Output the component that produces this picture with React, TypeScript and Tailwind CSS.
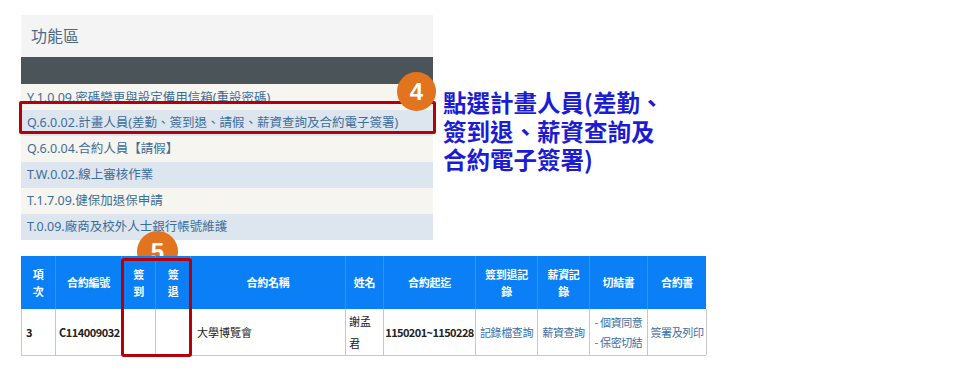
import React from "react";

const rows = [
  { t: "Y.1.0.09.密碼變更與設定備用信箱(重設密碼)", bg: "bg-[#f7f5ef]" },
  { t: "Q.6.0.02.計畫人員(差勤、簽到退、請假、薪資查詢及合約電子簽署)", bg: "bg-[#dde6ee]" },
  { t: "Q.6.0.04.合約人員【請假】", bg: "bg-[#f7f5ef]" },
  { t: "T.W.0.02.線上審核作業", bg: "bg-[#dde6ee]" },
  { t: "T.1.7.09.健保加退保申請", bg: "bg-[#f7f5ef]" },
  { t: "T.0.09.廠商及校外人士銀行帳號維護", bg: "bg-[#dde6ee]" },
];

const cols: { w: string; h: React.ReactNode }[] = [
  { w: "w-[34px]", h: <>項<br />次</> },
  { w: "w-[66px]", h: "合約編號" },
  { w: "w-[34px]", h: <>簽<br />到</> },
  { w: "w-[35px]", h: <>簽<br />退</> },
  { w: "w-[155px]", h: "合約名稱" },
  { w: "w-[38px]", h: "姓名" },
  { w: "w-[92px]", h: "合約起迄" },
  { w: "w-[62px]", h: <>簽到退記<br />錄</> },
  { w: "w-[52px]", h: <>薪資記<br />錄</> },
  { w: "w-[58px]", h: "切結書" },
  { w: "w-[59px]", h: "合約書" },
];

const body: React.ReactNode[] = [
  <span className="pl-[4px] font-bold">3</span>,
  <span className="pl-[3px] font-bold tracking-[-0.5px]">C114009032</span>,
  null,
  null,
  <span className="pl-[6px]">大學博覽會</span>,
  <span className="pl-[3px] leading-[22px]">謝孟<br />君</span>,
  <span className="w-full text-center font-bold tracking-[-0.6px]">1150201~1150228</span>,
  <span className="w-full text-center tracking-[-0.4px] text-[#3b6ea5]">記錄檔查詢</span>,
  <span className="w-full text-center tracking-[-0.4px] text-[#3b6ea5]">薪資查詢</span>,
  <span className="w-full text-center tracking-[-0.4px] text-[#3b6ea5] leading-[20px]">- 個資同意<br />- 保密切結</span>,
  <span className="w-full text-center tracking-[-0.4px] text-[#3b6ea5]">簽署及列印</span>,
];

function Badge({ n, className }: { n: string; className: string }) {
  return (
    <div
      className={`absolute flex items-center justify-center rounded-full bg-[#e2731f] text-[24px] font-bold text-white ${className}`}
      style={{ fontFamily: '"Liberation Sans", Arial, sans-serif' }}
    >
      {n}
    </div>
  );
}

const noteLines = ["點選計畫人員(差勤、", "簽到退、薪資查詢及", "合約電子簽署)"];

export default function App() {
  return (
    <div
      className="relative h-[372px] w-[954px] overflow-hidden bg-white pl-[21px] pt-[15px]"
      style={{ fontFamily: '"Noto Sans", "Noto Sans CJK TC", sans-serif' }}
    >
      <div className="flex">
        <div className="w-[412px]">
          <div className="flex h-[42px] items-center bg-[#f4f4f4] pl-[10px] text-[16px] text-[#4b6a88]">功能區</div>
          <div className="h-[27px] bg-[#4a5459]" />
          {rows.map((r, i) => (
            <div
              key={i}
              className={`flex h-[26px] items-center pl-[6px] text-[12.5px] text-[#3d6d9c] ${r.bg} ${i === 0 ? "pt-[2px]" : ""}`}
            >
              {r.t}
            </div>
          ))}
        </div>
        <div
          className="ml-[10px] mt-[76px] flex flex-col gap-[5px] whitespace-nowrap text-[23.5px] font-bold leading-none text-[#1c1cd4]"
          style={{ fontFamily: '"Noto Sans CJK TC", sans-serif' }}
        >
          {noteLines.map((l, i) => (
            <div key={i}>{l}</div>
          ))}
        </div>
      </div>

      <div className="absolute left-[19px] top-[101px] h-[33px] w-[417px] rounded-[2px] border-[3px] border-[#b3000a]" />
      <Badge n="4" className="left-[397px] top-[72px] h-[39px] w-[39px]" />
      <Badge n="5" className="left-[137px] top-[231px] h-[41px] w-[41px]" />

      <div
        className="relative mt-[16px] w-[685px] text-[11px]"
        style={{ fontFamily: '"Noto Sans CJK TC", sans-serif' }}
      >
        <div className="flex h-[53px] bg-[#0b7ff6] font-bold text-white">
          {cols.map((c, i) => (
            <div
              key={i}
              className={`flex ${c.w} shrink-0 items-center justify-center text-center leading-[17px] tracking-[-0.3px] ${i > 0 ? "border-l border-[#3c93e4]" : ""}`}
            >
              <span>{c.h}</span>
            </div>
          ))}
        </div>
        <div className="flex h-[47px] border-b border-l border-[#c9c9c9] text-[#222]">
          {cols.map((c, i) => (
            <div
              key={i}
              className={`flex ${c.w} shrink-0 items-center overflow-hidden border-r border-[#c9c9c9]`}
            >
              {body[i]}
            </div>
          ))}
        </div>
        <div className="absolute left-[100px] top-[2px] h-[99px] w-[71px] rounded-[3px] border-[3px] border-[#b3000a]" />
      </div>
    </div>
  );
}
